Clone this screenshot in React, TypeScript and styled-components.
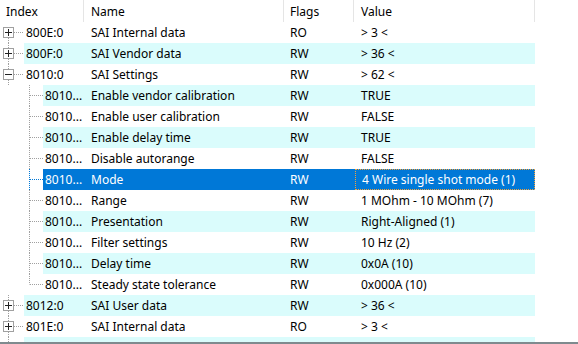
import React from "react";
import styled, { createGlobalStyle } from "styled-components";

const GlobalStyle = createGlobalStyle`
  html, body {
    margin: 0;
    padding: 0;
    background: #fff;
  }
  body {
    font-family: "Noto Sans", "Liberation Sans", sans-serif;
    font-size: 12px;
    color: #000;
  }
`;

const SELECTED = "#0078d7";
const STRIPE = "#dafcfc";
const LINE = "#a0a0a0";
const LIST_W = 535;

// whole list view, cut at the bottom by the window edge
const ListView = styled.div`
  width: 578px;
  height: 342px;
  overflow: hidden;
  border-bottom: 2px solid #7f8a8e;
  display: flex;
  flex-direction: column;
`;

const Header = styled.div`
  display: flex;
  height: 22px;
  flex-shrink: 0;
`;

const HeadCell = styled.div<{ $w: number; $pad: number }>`
  width: ${(p) => p.$w}px;
  padding-left: ${(p) => p.$pad}px;
  box-sizing: border-box;
  border-right: 1px solid #e5e5e5;
  display: flex;
  align-items: center;
  white-space: nowrap;
`;

const Row = styled.div`
  display: flex;
  height: 21px;
  flex-shrink: 0;
`;

const Gutter = styled.svg`
  display: block;
  flex-shrink: 0;
`;

// the striped / selected part of a row, from the label to the last column
const Band = styled.div<{ $bg: string; $sel: boolean; $gutter: number }>`
  display: flex;
  width: ${(p) => LIST_W - p.$gutter}px;
  background: ${(p) => p.$bg};
  color: ${(p) => (p.$sel ? "#fff" : "#000")};
`;

const Cell = styled.div<{ $w: number; $pad: number; $focus?: boolean }>`
  width: ${(p) => p.$w}px;
  flex-shrink: 0;
  padding-left: ${(p) => p.$pad}px;
  box-sizing: border-box;
  white-space: nowrap;
  overflow: hidden;
  display: flex;
  align-items: center;
  border: ${(p) => (p.$focus ? "1px dotted #f2a23c" : "none")};
`;

type Item = {
  index: string;
  name: string;
  flags: string;
  value: string;
  level: 0 | 1;
  box?: "+" | "-";
  last?: boolean;
};

const items: Item[] = [
  { index: "800E:0", name: "SAI Internal data", flags: "RO", value: "> 3 <", level: 0, box: "+" },
  { index: "800F:0", name: "SAI Vendor data", flags: "RW", value: "> 36 <", level: 0, box: "+" },
  { index: "8010:0", name: "SAI Settings", flags: "RW", value: "> 62 <", level: 0, box: "-" },
  { index: "8010...", name: "Enable vendor calibration", flags: "RW", value: "TRUE", level: 1 },
  { index: "8010...", name: "Enable user calibration", flags: "RW", value: "FALSE", level: 1 },
  { index: "8010...", name: "Enable delay time", flags: "RW", value: "TRUE", level: 1 },
  { index: "8010...", name: "Disable autorange", flags: "RW", value: "FALSE", level: 1 },
  { index: "8010...", name: "Mode", flags: "RW", value: "4 Wire single shot mode (1)", level: 1 },
  { index: "8010...", name: "Range", flags: "RW", value: "1 MOhm - 10 MOhm (7)", level: 1 },
  { index: "8010...", name: "Presentation", flags: "RW", value: "Right-Aligned (1)", level: 1 },
  { index: "8010...", name: "Filter settings", flags: "RW", value: "10 Hz (2)", level: 1 },
  { index: "8010...", name: "Delay time", flags: "RW", value: "0x0A (10)", level: 1 },
  { index: "8010...", name: "Steady state tolerance", flags: "RW", value: "0x000A (10)", level: 1, last: true },
  { index: "8012:0", name: "SAI User data", flags: "RW", value: "> 36 <", level: 0, box: "+" },
  { index: "801E:0", name: "SAI Internal data", flags: "RO", value: "> 3 <", level: 0, box: "+" },
  // next row, scrolled out of view below the edge
  { index: "", name: "", flags: "", value: "", level: 0, box: "+" },
];

const SEL_ROW = 7;

const TreeLines: React.FC<{ item: Item; first: boolean; sel: boolean }> = ({ item, first, sel }) => {
  const w = item.level === 0 ? 24 : 43;
  const c = sel ? SELECTED : LINE;
  return (
    <Gutter width={w} height={21}>
      {item.level === 0 ? (
        <>
          {!first && <line x1={8.5} y1={0} x2={8.5} y2={6} stroke={LINE} strokeDasharray="1 1" />}
          <line x1={8.5} y1={16} x2={8.5} y2={21} stroke={LINE} strokeDasharray="1 1" />
          <line x1={14} y1={10.5} x2={24} y2={10.5} stroke={LINE} strokeDasharray="1 1" />
          <rect x={3.5} y={5.5} width={10} height={10} fill="#fff" stroke={LINE} />
          <line x1={5} y1={10.5} x2={12} y2={10.5} stroke="#222" />
          {item.box === "+" && <line x1={8.5} y1={7} x2={8.5} y2={14} stroke="#222" />}
        </>
      ) : (
        <>
          <line x1={29.5} y1={0} x2={29.5} y2={item.last ? 10.5 : 21} stroke={c} strokeDasharray="1 1" />
          <line x1={30} y1={10.5} x2={43} y2={10.5} stroke={c} strokeDasharray="1 1" />
        </>
      )}
    </Gutter>
  );
};

export default function App() {
  return (
    <>
      <GlobalStyle />
      <ListView>
        <Header>
          <HeadCell $w={84} $pad={6}>Index</HeadCell>
          <HeadCell $w={200} $pad={7}>Name</HeadCell>
          <HeadCell $w={70} $pad={6}>Flags</HeadCell>
          <HeadCell $w={181} $pad={7}>Value</HeadCell>
        </Header>
        {items.map((it, i) => {
          const sel = i === SEL_ROW;
          const bg = sel ? SELECTED : i % 2 === 1 ? STRIPE : "#fff";
          const gutter = it.level === 0 ? 24 : 43;
          return (
            <Row key={i}>
              <TreeLines item={it} first={i === 0} sel={sel} />
              <Band $bg={bg} $sel={sel} $gutter={gutter}>
                <Cell $w={84 - gutter} $pad={2}>{it.index}</Cell>
                <Cell $w={200} $pad={7}>{it.name}</Cell>
                <Cell $w={71} $pad={6}>{it.flags}</Cell>
                <Cell $w={180} $pad={6} $focus={sel}>{it.value}</Cell>
              </Band>
            </Row>
          );
        })}
      </ListView>
    </>
  );
}
